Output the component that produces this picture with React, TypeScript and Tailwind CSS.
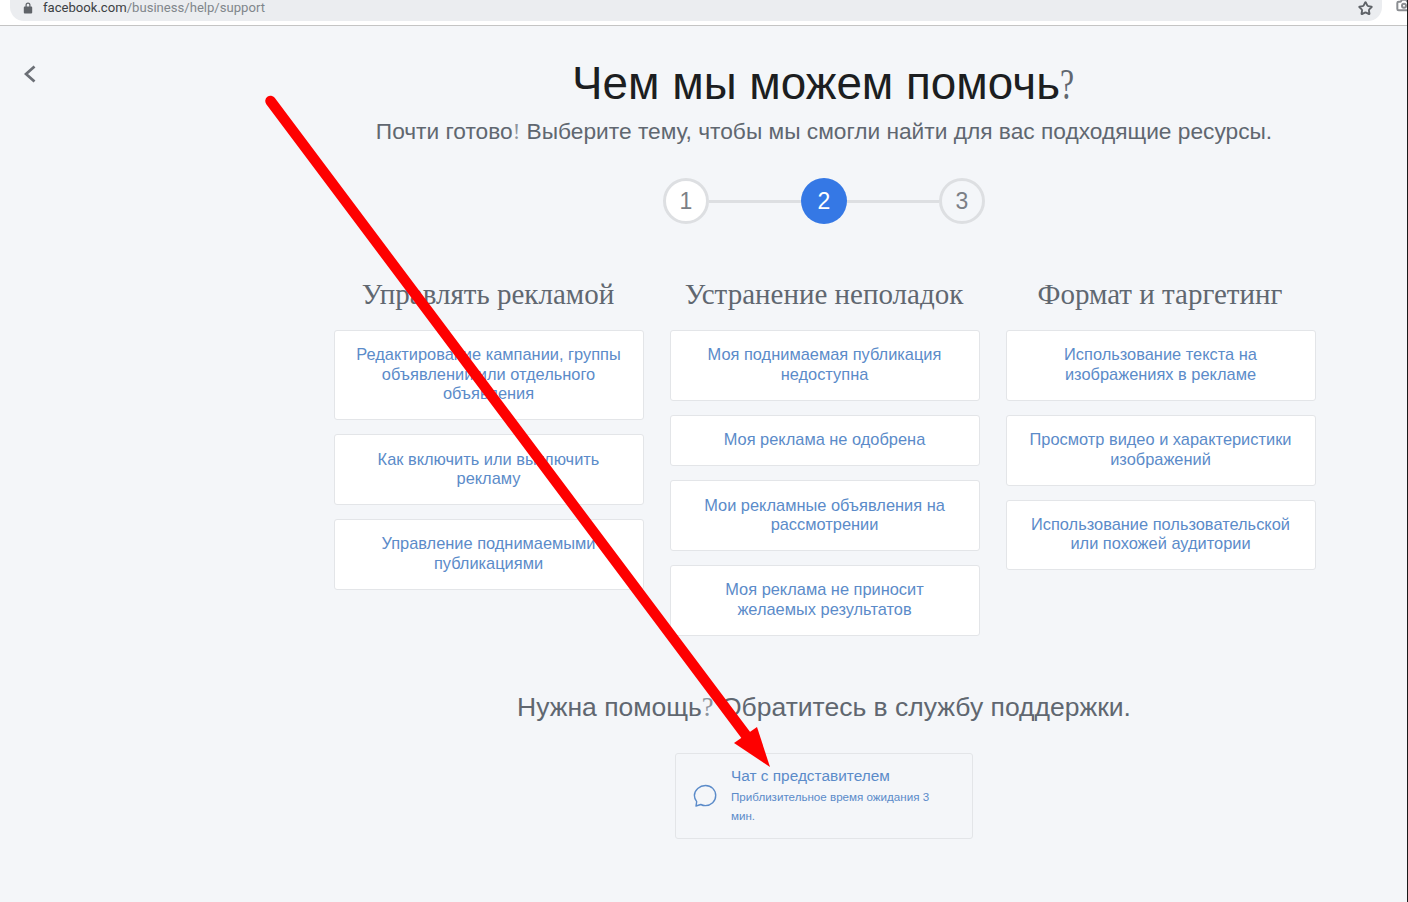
import React from 'react';
import { Star, Camera } from 'lucide-react';

const columns = [
  {
    title: 'Управлять рекламой',
    items: [
      'Редактирование кампании, группы объявлений или отдельного объявления',
      'Как включить или выключить рекламу',
      'Управление поднимаемыми публикациями',
    ],
  },
  {
    title: 'Устранение неполадок',
    items: [
      'Моя поднимаемая публикация недоступна',
      'Моя реклама не одобрена',
      'Мои рекламные объявления на рассмотрении',
      'Моя реклама не приносит желаемых результатов',
    ],
  },
  {
    title: 'Формат и таргетинг',
    items: [
      'Использование текста на изображениях в рекламе',
      'Просмотр видео и характеристики изображений',
      'Использование пользовательской или похожей аудитории',
    ],
  },
];

function Step({ n, active, muted }: { n: number; active?: boolean; muted?: boolean }) {
  if (active) {
    return (
      <div className="flex h-[46px] w-[46px] shrink-0 items-center justify-center rounded-full bg-[#3578e5] text-[23px] text-white">
        {n}
      </div>
    );
  }
  return (
    <div
      className={`flex h-[46px] w-[46px] shrink-0 items-center justify-center rounded-full border-[3px] border-[#dddfe2] text-[23px] text-[#7b7f86] ${
        muted ? 'bg-[#f4f6f9]' : 'bg-white'
      }`}
    >
      {n}
    </div>
  );
}

export default function App() {
  return (
    <div className="relative h-[902px] w-[1408px] overflow-hidden bg-[#f4f6f9] font-['Liberation_Sans',Arial,sans-serif]">
      {/* browser bar */}
      <div className="flex h-[26px] items-start justify-between border-b border-[#c4c4c4] bg-white pl-[10px]">
        <div className="flex h-[21px] w-[1372px] items-center justify-between rounded-b-[14px] bg-[#ebedf0] pl-[13px] pr-[9px]">
          <div className="-mt-[5px] flex items-center gap-[10px] font-['Roboto',sans-serif] text-[13.1px]">
            <svg width="10" height="12" viewBox="0 0 10 12" className="text-[#5f6368]">
              <path
                fill="currentColor"
                d="M2.5 4.5V3a2.5 2.5 0 0 1 5 0v1.5h.8c.5 0 .9.4.9.9v5.2c0 .5-.4.9-.9.9H1.7c-.5 0-.9-.4-.9-.9V5.4c0-.5.4-.9.9-.9h.8zm1.2 0h2.6V3a1.3 1.3 0 0 0-2.6 0v1.5z"
              />
            </svg>
            <span>
              <span className="text-[#3c4043]">facebook.com</span>
              <span className="text-[#80868b]">/business/help/support</span>
            </span>
          </div>
          <Star className="-mt-[5px] h-[15px] w-[15px] text-[#5f6368]" strokeWidth={3} />
        </div>
        <div className="-mt-[3px] flex w-[26px] justify-start pl-[14px]">
          <Camera className="h-[16px] w-[16px] shrink-0 text-[#8a8d91]" strokeWidth={3} />
        </div>
      </div>

      <div className="flex">
        {/* back */}
        <div className="w-[334px] shrink-0 pl-[24px] pt-[39px]">
          <svg width="12" height="18" viewBox="0 0 12 18" fill="none" className="text-[#6b6f76]">
            <path d="M10.5 1.5 2 9l8.5 7.5" stroke="currentColor" strokeWidth="2.8" />
          </svg>
        </div>

        <div className="flex w-[982px] shrink-0 flex-col items-center">
          <h1 className="mt-[30px] mr-[4px] h-[56px] whitespace-nowrap text-[45.8px] leading-[56px] text-[#1c1e21]">
            Чем мы можем помочь
            <span className="inline-block w-[14px] origin-left scale-x-[0.72] font-['Liberation_Serif',serif] text-[44px] leading-none text-[#606770]">?</span>
          </h1>
          <p className="mt-[5px] mr-[2px] h-[28px] whitespace-nowrap text-[22.72px] leading-[28px] text-[#606770]">
            Почти готово<span className="font-['Liberation_Serif',serif] leading-none text-[#8d949e]">!</span> Выберите тему, чтобы мы смогли найти для вас подходящие ресурсы.
          </p>

          {/* steps */}
          <div className="mt-[33px] mr-[2px] flex items-center">
            <Step n={1} />
            <div className="h-[3px] w-[92px] bg-[#dddfe2]" />
            <Step n={2} active />
            <div className="h-[3px] w-[92px] bg-[#dddfe2]" />
            <Step n={3} muted />
          </div>

          {/* topics */}
          <div className="mt-[50px] grid h-[363px] w-full grid-cols-3 gap-[26px]">
            {columns.map((col) => (
              <div key={col.title} className="flex flex-col">
                <h2 className="mb-[16px] pr-[2px] whitespace-nowrap text-center font-['Liberation_Serif',serif] text-[29px] leading-[40px] text-[#606770]">
                  {col.title}
                </h2>
                <div className="flex flex-col gap-[14px]">
                  {col.items.map((item) => (
                    <div
                      key={item}
                      className="rounded-[3px] border border-[#e3e5e8] bg-white pb-[15.6px] pl-[20.5px] pr-[21.5px] pt-[14.4px] text-center text-[16.4px] leading-[19.4px] text-[#5b8bc9]"
                    >
                      {item}
                    </div>
                  ))}
                </div>
              </div>
            ))}
          </div>

          {/* support */}
          <p className="mt-[53px] mr-[2px] h-[34px] whitespace-nowrap text-[26.5px] leading-[34px] text-[#606770]">
            Нужна помощь<span className="font-['Liberation_Serif',serif] leading-none text-[#8d949e]">?</span> Обратитесь в службу поддержки.
          </p>
          <div className="mt-[29px] mr-[2px] flex h-[86px] w-[298px] items-center rounded-[3px] border border-[#e3e5e8] pl-[17px] pr-[40px]">
            <svg width="24" height="24" viewBox="0 0 24 24" fill="none" className="shrink-0 text-[#5b8bc9]">
              <path
                d="M12.5 1.5c5.8 0 10.2 4.3 10.2 10.1s-4.6 10-10.3 10c-1.7 0-3.2-.4-4.6-1.1L3 22l.7-4.4c-1.5-1.7-2.3-3.8-2.3-6C1.4 5.9 6.6 1.5 12.5 1.5z"
                stroke="currentColor"
                strokeWidth="1.4"
                strokeLinejoin="round"
              />
            </svg>
            <div className="mb-[2px] ml-[14px] text-[#5b8bc9]">
              <div className="whitespace-nowrap text-[15.4px] leading-[20px]">Чат с представителем</div>
              <div className="mt-[1px] text-[11.6px] leading-[19px]">Приблизительное время ожидания 3 мин.</div>
            </div>
          </div>
        </div>
      </div>

      {/* red arrow drawn over the page */}
      <svg className="pointer-events-none absolute left-0 top-0" width="1408" height="902" viewBox="0 0 1408 902">
        <line x1="270.5" y1="101" x2="748" y2="738" stroke="#fe0000" strokeWidth="10.5" strokeLinecap="round" />
        <polygon points="770,767 734,743 757,727" fill="#fe0000" />
      </svg>

      {/* screenshot edge */}
      <div className="absolute right-0 top-0 h-full w-px bg-[#1a1a1a]" />
    </div>
  );
}
